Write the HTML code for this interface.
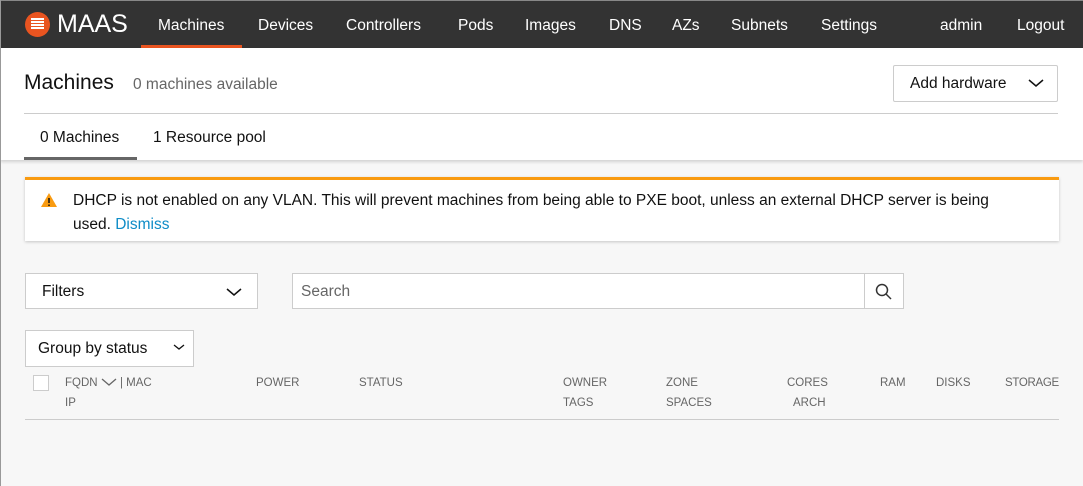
<!DOCTYPE html><html><head><style>
*{box-sizing:border-box;margin:0;padding:0}
body{width:1083px;height:486px;background:#f7f7f7;font-family:"Liberation Sans",sans-serif;color:#111;position:relative;overflow:hidden}
.nav{position:absolute;left:0;top:0;width:1083px;height:48px;background:#333;border-top:1px solid #888}
.nav span{position:absolute;top:16px;color:#fff;font-size:15.5px}
.a{position:absolute}
.hdr{position:absolute;left:0;top:48px;width:1083px;height:112px;background:#fff;box-shadow:0 2px 3px rgba(0,0,0,.15)}
.th{position:absolute;font-size:11.5px;color:#666}
</style></head><body>
<div class="nav">
<div class="a" style="left:25px;top:11px;width:25px;height:25px;border-radius:50%;background:#e95420"></div>
<div class="a" style="left:31px;top:17px;width:13px;height:2px;background:#fff;box-shadow:0 3px #fff,0 6px #fff,0 9px #fff"></div>
<span style="left:57px;top:9px;font-size:25px">MAAS</span>
<span style="left:158px">Machines</span>
<div class="a" style="left:141px;top:44px;width:101px;height:3px;background:#e95420"></div>
<span style="left:258px">Devices</span><span style="left:346px">Controllers</span><span style="left:458px">Pods</span><span style="left:525px">Images</span><span style="left:609px">DNS</span><span style="left:672px">AZs</span><span style="left:731px">Subnets</span><span style="left:821px">Settings</span><span style="left:940px">admin</span><span style="left:1017px">Logout</span>
</div>
<div class="hdr">
<div class="a" style="left:24px;top:23px;font-size:21px">Machines</div>
<div class="a" style="left:133px;top:28px;font-size:15.5px;color:#666">0 machines available</div>
<div class="a" style="left:893px;top:17px;width:165px;height:37px;border:1px solid #ccc;border-radius:2px;font-size:15.5px;padding:9px 16px">Add hardware</div>
<svg class="a" style="left:1028px;top:31px" width="16" height="9"><path d="M1 1l7 6 7-6" stroke="#111" fill="none" stroke-width="1.5"/></svg>
<div class="a" style="left:24px;top:65px;width:1034px;height:1px;background:#ccc"></div>
<div class="a" style="left:40px;top:81px;font-size:15.5px">0 Machines</div>
<div class="a" style="left:24px;top:109px;width:113px;height:3px;background:#666"></div>
<div class="a" style="left:153px;top:81px;font-size:15.5px">1 Resource pool</div>
</div>
<div class="a" style="left:0;top:0;width:1px;height:486px;background:#999"></div>
<div class="a" style="left:25px;top:177px;width:1034px;height:64px;background:#fff;border-top:3px solid #f99b11;box-shadow:0 1px 3px rgba(0,0,0,.2)"></div>
<svg class="a" style="left:40px;top:192px" width="18" height="16"><path d="M9 1L17 15H1z" fill="#f99b11"/><path d="M9 6v5M9 12.5v1.5" stroke="#111" stroke-width="1.5"/></svg>
<div class="a" style="left:73px;top:189px;width:935px;font-size:15.5px;line-height:24px">DHCP is not enabled on any VLAN. This will prevent machines from being able to PXE boot, unless an external DHCP server is being used. <span style="color:#0e8cc7">Dismiss</span></div>
<div class="a" style="left:25px;top:273px;width:233px;height:36px;border:1px solid #ccc;background:#fff;font-size:15.5px;padding:9px 16px">Filters</div>
<svg class="a" style="left:226px;top:288px" width="16" height="9"><path d="M1 1l7 6 7-6" stroke="#111" fill="none" stroke-width="1.5"/></svg>
<div class="a" style="left:292px;top:273px;width:612px;height:36px;border:1px solid #ccc;background:#fff;font-size:15.5px;padding:9px 8px;color:#666">Search</div>
<div class="a" style="left:864px;top:273px;width:1px;height:36px;background:#ccc"></div>
<svg class="a" style="left:875px;top:283px" width="18" height="18"><circle cx="7" cy="7" r="5.5" stroke="#333" fill="none" stroke-width="1.5"/><path d="M11 11l5 5" stroke="#333" stroke-width="1.5"/></svg>
<div class="a" style="left:25px;top:330px;width:169px;height:37px;border:1px solid #ccc;background:#fff;font-size:15.5px;padding:9px 12px">Group by status</div>
<svg class="a" style="left:173px;top:344px" width="12" height="7"><path d="M1 1l5 4 5-4" stroke="#111" fill="none" stroke-width="1.3"/></svg>
<div class="a" style="left:33px;top:375px;width:16px;height:16px;border:1px solid #ccc;background:#fff"></div>
<div class="th" style="left:65px;top:377px">FQDN <svg width="16" height="8"><path d="M1 1l7 6 7-6" stroke="#666" fill="none" stroke-width="1.3"/></svg> | MAC</div>
<div class="th" style="left:65px;top:397px">IP</div>
<div class="th" style="left:256px;top:377px">POWER</div>
<div class="th" style="left:359px;top:377px">STATUS</div>
<div class="th" style="left:563px;top:377px">OWNER</div><div class="th" style="left:563px;top:397px">TAGS</div>
<div class="th" style="left:666px;top:377px">ZONE</div><div class="th" style="left:666px;top:397px">SPACES</div>
<div class="th" style="left:787px;top:377px">CORES</div><div class="th" style="left:793px;top:397px">ARCH</div>
<div class="th" style="left:880px;top:377px">RAM</div>
<div class="th" style="left:936px;top:377px">DISKS</div>
<div class="th" style="left:1005px;top:377px;letter-spacing:-0.3px">STORAGE</div>
<div class="a" style="left:25px;top:419px;width:1034px;height:1px;background:#ccc"></div>
</body></html>
